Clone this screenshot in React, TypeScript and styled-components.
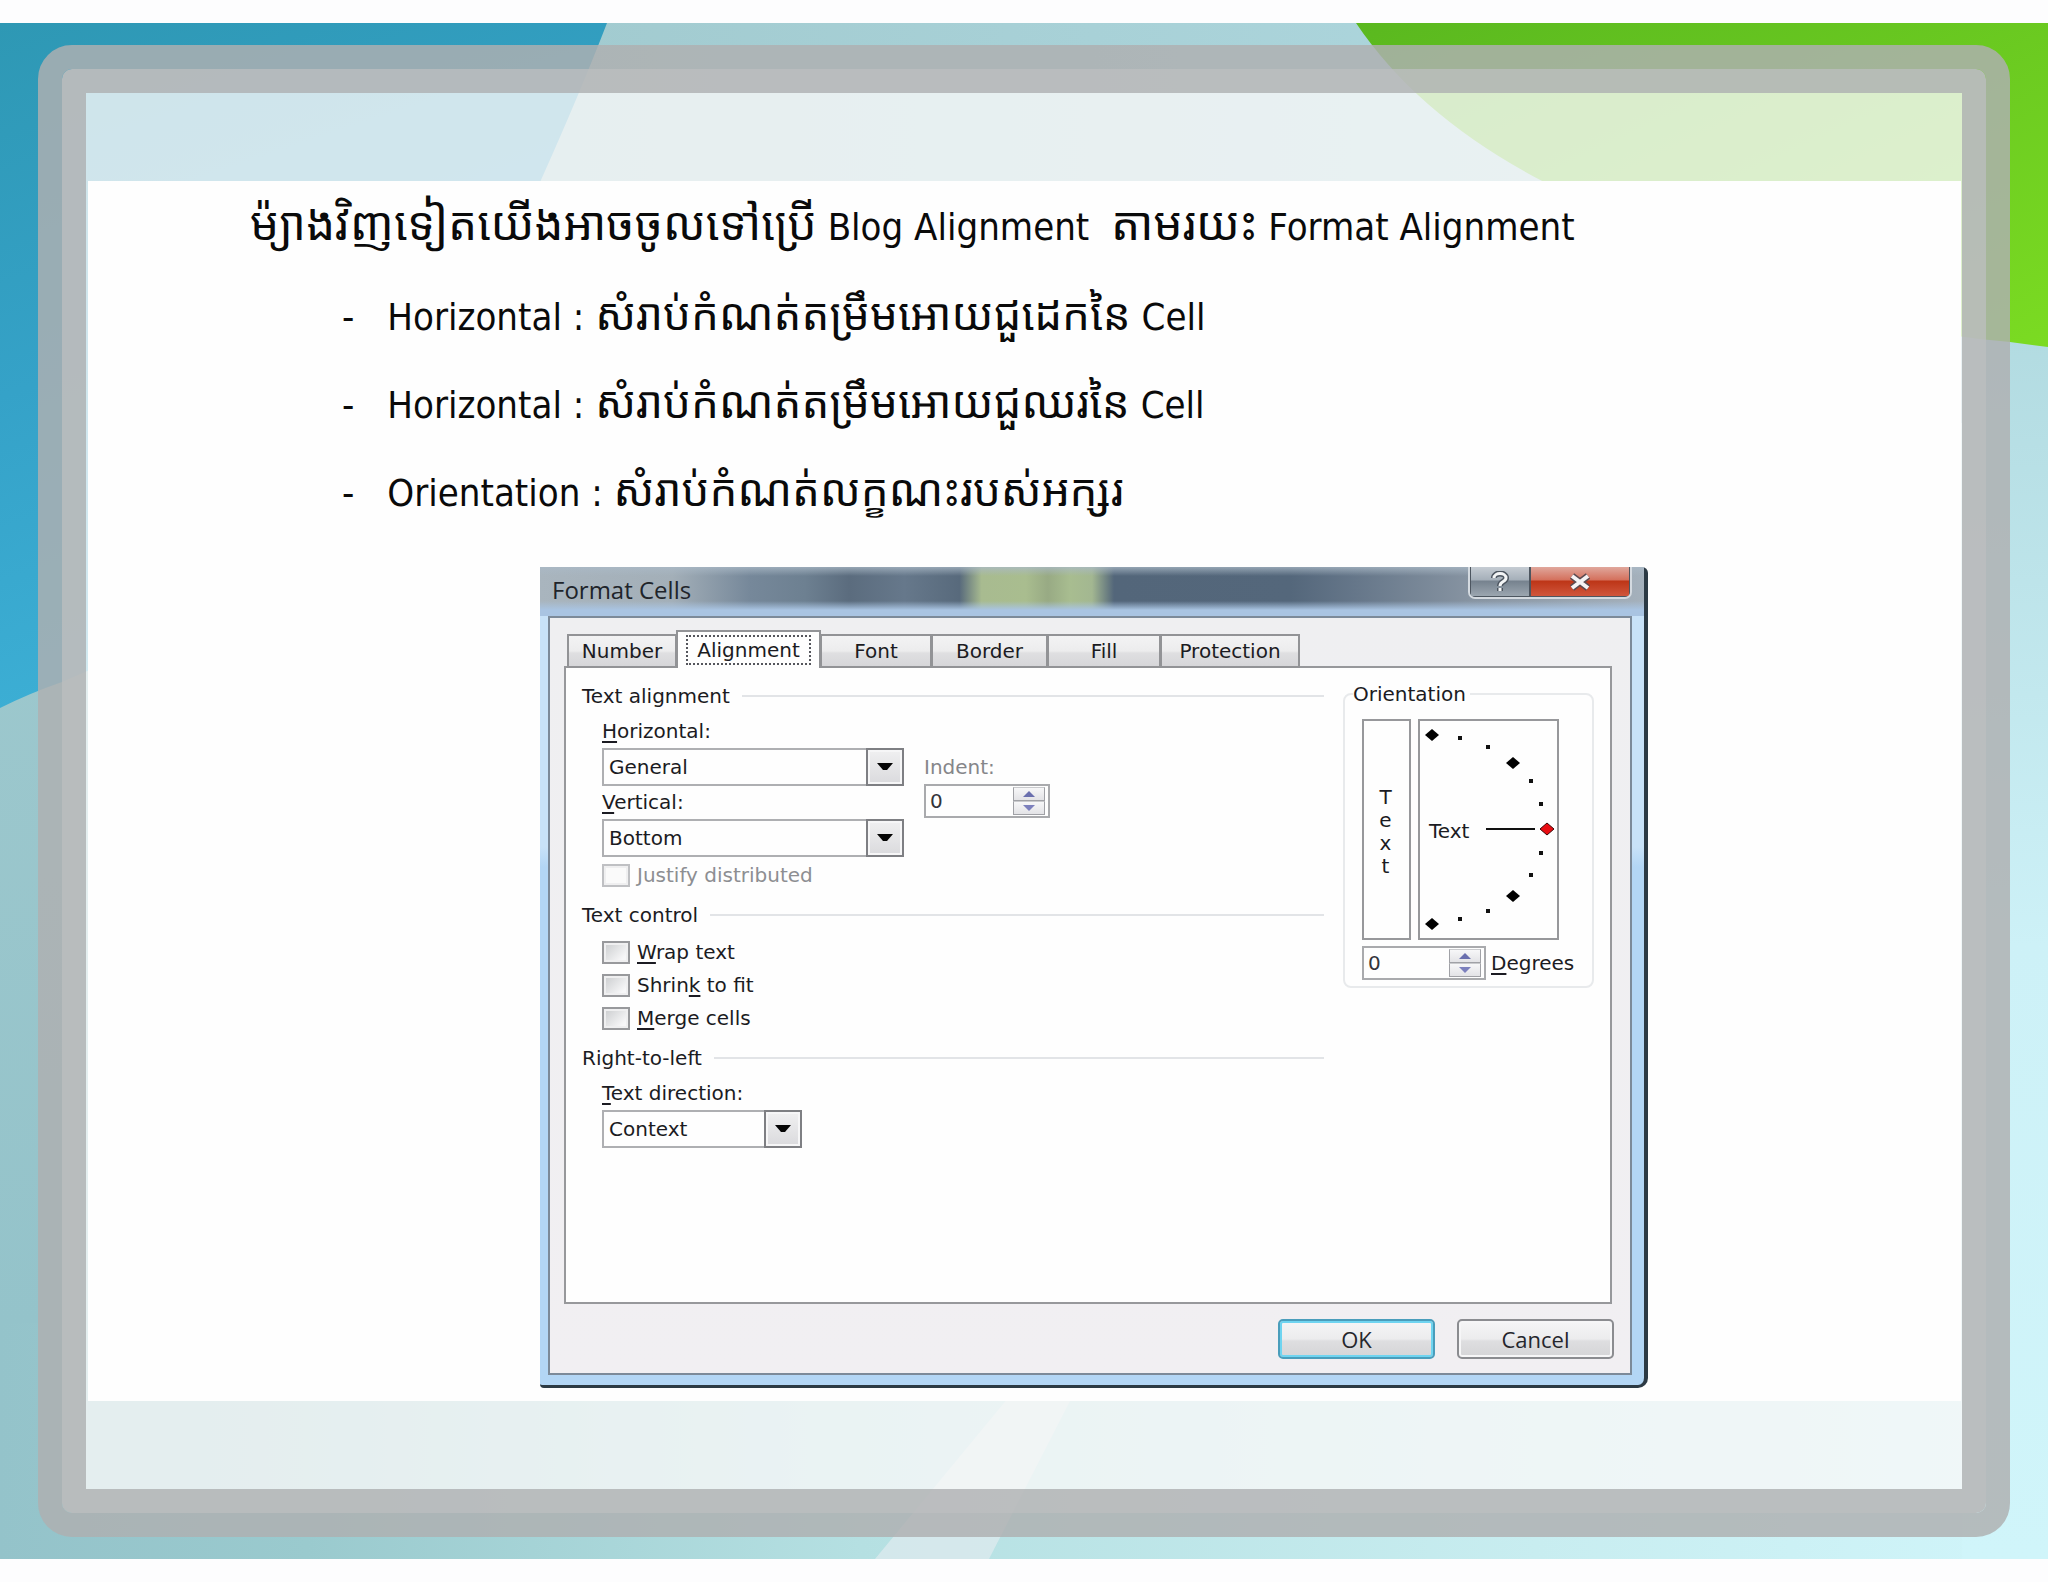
import React, { useState } from "react";
import styled, { createGlobalStyle, css } from "styled-components";

const GlobalStyle = createGlobalStyle`
  *, *::before, *::after { box-sizing: border-box; }
  body { margin: 0; background: #fdfdfe; }
`;

const uiFont = `"DejaVu Sans", "Liberation Sans", sans-serif`;
const captionFont = `"Open Sans", "Noto Sans", sans-serif`;
const slideFont = `"DejaVu Sans Condensed", "Noto Sans", "Noto Sans Khmer", "Khmer OS", sans-serif`;

/* ---------- slide ---------- */

const Page = styled.main`
  padding: 23px 0;
`;

const Slide = styled.section`
  position: relative;
  padding: 22px 38px;
`;

const Backdrop = styled.svg`
  position: absolute;
  inset: 0;
  width: 100%;
  height: 100%;
`;

const OuterFrame = styled.div`
  position: relative;
  border: 24px solid rgba(175, 176, 177, 0.83);
  border-radius: 34px;
`;

const InnerFrame = styled.div`
  border: 24px solid rgba(185, 187, 188, 0.96);
  border-radius: 10px;
`;

const Sheet = styled.div`
  padding: 88px 1px 88px 2px;
  background: rgba(248, 248, 248, 0.8);
`;

const Content = styled.article`
  padding: 2px 24px 13px 162px;
  background: #fefefe;
  color: #0a0a0a;
`;

const Khmer = styled.span`
  font-size: 44px;
  line-height: 1;
`;

const Lead = styled.h1`
  margin: 0 0 2px;
  font: 400 38px/88px ${slideFont};
  white-space: pre-wrap;

  ${Khmer} { font-size: 46px; }
`;

const Points = styled.ul`
  margin: 0 0 30px;
  padding: 0 0 0 92px;
  list-style: none;
`;

const Point = styled.li`
  display: flex;
  gap: 33px;
  font: 400 38px/88px ${slideFont};
`;

/* ---------- dialog window ---------- */

const Window = styled.section`
  width: 1108px;
  max-width: 100%;
  margin-left: 290px;
  padding: 0 12px 10px 8px;
  border: solid #2c3a44;
  border-width: 0 4px 3px 0;
  border-radius: 0 6px 10px 4px;
  background: linear-gradient(#c8e2f8 0 280px, #b3d6f5 300px);
  color: #1b1b22;
  font: 400 20px/28px ${uiFont};
`;

const TitleBar = styled.header`
  display: flex;
  align-items: flex-start;
  justify-content: space-between;
  height: 49px;
  margin: 0 -12px 0 -8px;
  padding: 0 12px;
  background:
    linear-gradient(rgba(170, 185, 198, 0.75), rgba(170, 185, 198, 0) 9px 34px, #a9c4e2 43px),
    linear-gradient(
      90deg,
      #a9b5be 0%,
      #a3afb8 12%,
      #76889a 19%,
      #6d8091 24%,
      #5b6c7e 28%,
      #66788b 33%,
      #586a7c 38%,
      #a8bb90 40%,
      #a9bd8f 44%,
      #98aa84 46%,
      #a8bd90 48%,
      #a3b791 50%,
      #53667a 52%,
      #54677b 68%,
      #66778a 74%,
      #8693a1 84%,
      #a5b1bc 100%
    );
`;

const Caption = styled.h2`
  margin: 0;
  font: 400 24px/46px ${captionFont};
  color: #20242a;
`;

const CaptionButtons = styled.div`
  display: flex;
  border: 2px solid #d4dae0;
  border-top: 0;
  border-radius: 0 0 7px 7px;
  overflow: hidden;
`;

const CaptionButton = styled.button<{ $danger?: boolean }>`
  display: grid;
  place-items: center;
  width: ${(p) => (p.$danger ? 100 : 60)}px;
  height: 30px;
  padding: 0;
  border: solid #4d5660;
  border-width: 0 1px 1px;
  background: ${(p) =>
    p.$danger
      ? "linear-gradient(#e0a79c, #d4705c 13px, #bd3517 14px, #d0563c)"
      : "linear-gradient(#c5ccd3, #a5afb9 13px, #76828e 14px, #9ba6b0)"};
`;

const ClientArea = styled.div`
  padding: 12px 18px 14px 14px;
  border: 2px solid #7c8a99;
  background: linear-gradient(#efeff1, #f1eff2);
`;

const TabStrip = styled.div`
  position: relative;
  display: flex;
  align-items: flex-end;
  height: 38px;
  margin: 0 0 -2px;
  padding-left: 4px;
`;

const Tab = styled.button<{ $width: number; $active: boolean }>`
  width: ${(p) => p.$width}px;
  height: 34px;
  padding: 0;
  border: 2px solid #929396;
  margin-left: -1px;
  background: linear-gradient(#f3f3f4, #ececed 15px, #dfdfe1 17px, #d6d6d9);
  color: inherit;
  font: inherit;
  ${(p) =>
    p.$active &&
    css`
      height: 38px;
      padding: 2px 8px;
      border-bottom: 0;
      background: #fefefe;
    `}
`;

const FocusRing = styled.span<{ $on: boolean }>`
  display: block;
  border: 2px dotted ${(p) => (p.$on ? "#55565c" : "transparent")};
  line-height: 26px;
`;

const Panel = styled.div`
  display: grid;
  grid-template-columns: minmax(0, 1fr) 251px;
  align-items: start;
  gap: 19px;
  min-height: 638px;
  padding: 11px 16px;
  border: 2px solid #97989b;
  background: #fefefe;
`;

const Sections = styled.div`
  display: grid;
  gap: 6px;
`;

const Group = styled.section``;

const GroupTitle = styled.h3`
  display: flex;
  align-items: center;
  gap: 12px;
  margin: 0 0 2px;
  font: inherit;
  line-height: 34px;

  &::after {
    content: "";
    flex: 1;
    height: 2px;
    background: #e2e4e7;
  }
`;

const GroupBody = styled.div`
  display: flex;
  gap: 20px;
  padding-left: 20px;
`;

const Column = styled.div<{ $lowered?: boolean }>`
  padding-top: ${(p) => (p.$lowered ? 36 : 0)}px;
`;

const FieldLabel = styled.label<{ $muted?: boolean }>`
  display: block;
  line-height: 33px;
  color: ${(p) => (p.$muted ? "#85868a" : "inherit")};

  &::first-letter {
    text-decoration: ${(p) => (p.$muted ? "none" : "underline")};
    text-underline-offset: 3px;
  }
`;

const ComboFrame = styled.div<{ $width: number }>`
  display: grid;
  grid-template-columns: 1fr 38px;
  width: ${(p) => p.$width}px;
  height: 38px;
`;

const ComboSelect = styled.select`
  grid-area: 1 / 1 / 2 / 3;
  appearance: none;
  padding: 0 44px 0 5px;
  border: 2px solid #aeafb2;
  border-radius: 0;
  background: #fefefe;
  color: inherit;
  font: inherit;
`;

const ComboArrow = styled.span`
  grid-area: 1 / 2;
  display: grid;
  place-items: center;
  border: 2px solid #7e7f83;
  background: linear-gradient(#f0f0f1, #dadadd);
  box-shadow: inset 0 0 0 2px #f6f6f7;
  pointer-events: none;
`;

const SpinFrame = styled.div<{ $width: number }>`
  display: flex;
  width: ${(p) => p.$width}px;
  height: 34px;
  padding: 1px 3px 1px 0;
  border: 2px solid #a9aaad;
  background: #fefefe;
`;

const SpinInput = styled.input`
  flex: 1;
  min-width: 0;
  padding: 0 4px;
  border: 0;
  background: transparent;
  color: #33343a;
  font: inherit;
`;

const SpinButtons = styled.div`
  display: grid;
  grid-template-rows: 1fr 1fr;
  width: 32px;
`;

const SpinButton = styled.button`
  display: grid;
  place-items: center;
  padding: 0;
  border: 1px solid #a0a1a6;
  border-top-color: #c9cacd;
  background: linear-gradient(#f7f7f8, #e3e3e6);
`;

const CheckList = styled.div`
  padding-top: 2px;
`;

const CheckRow = styled.label<{ $muted?: boolean }>`
  display: flex;
  align-items: center;
  gap: 7px;
  line-height: 33px;
  color: ${(p) => (p.$muted ? "#8d8e92" : "inherit")};
`;

const CheckBox = styled.input`
  appearance: none;
  width: 28px;
  height: 23px;
  margin: 0;
  border: 2px solid #98999c;
  background: linear-gradient(135deg, #c9cbcd, #f7f7f8 80%);
  box-shadow: inset 0 0 0 2px #efeff0;

  &:checked { background: #5a6b7e; }
  &:disabled { border-color: #bfc0c3; background: #fafafa; }
`;

const Key = styled.u`
  text-underline-offset: 3px;
`;

const OrientationBox = styled.fieldset`
  min-width: 0;
  margin: 1px 0 0;
  padding: 11px 10px 6px 17px;
  border: 2px solid #e8eaec;
  border-radius: 8px;
`;

const OrientationLegend = styled.legend`
  margin-left: -9px;
  padding: 0 4px 0 0;
  line-height: 28px;
`;

const DialRow = styled.div`
  display: flex;
  gap: 7px;
  margin-bottom: 6px;
`;

const Upright = styled.button`
  display: flex;
  flex-direction: column;
  align-items: center;
  justify-content: center;
  width: 49px;
  padding: 4px 2px 0 0;
  border: 2px solid #97989b;
  background: #fefefe;
  color: inherit;
  font: inherit;
  line-height: 23px;
`;

const Dial = styled.svg`
  width: 141px;
  height: 221px;
  border: 2px solid #97989b;
`;

const DegreeRow = styled.div`
  display: flex;
  align-items: center;
  gap: 5px;
`;

const Actions = styled.footer`
  display: flex;
  justify-content: flex-end;
  gap: 22px;
  margin: 15px -2px 0 0;
`;

const ActionButton = styled.button<{ $primary?: boolean }>`
  width: 157px;
  height: 40px;
  padding: 0;
  border: 2px solid ${(p) => (p.$primary ? "#4a9dbb" : "#8b8c90")};
  border-radius: 5px;
  background: linear-gradient(#f5f5f6, #ececed 18px, #dedee0 20px, #d5d5d7);
  box-shadow: inset 0 0 0 2px ${(p) => (p.$primary ? "#6fd4f0" : "#f6f6f7")};
  color: #25262c;
  font: 400 22px/28px ${captionFont};
`;

/* ---------- pieces ---------- */

function SlideArt() {
  return (
    <Backdrop viewBox="0 0 2048 1536" preserveAspectRatio="none" aria-hidden="true">
      <defs>
        <linearGradient id="floor" x1="0" y1="0" x2="1" y2="0">
          <stop offset="0" stopColor="#94c3ca" />
          <stop offset="0.15" stopColor="#9acace" />
          <stop offset="0.42" stopColor="#b5e0e2" />
          <stop offset="0.75" stopColor="#c8edf0" />
          <stop offset="1" stopColor="#d0f5fa" />
        </linearGradient>
        <linearGradient id="sky" x1="0" y1="0" x2="1" y2="0">
          <stop offset="0.28" stopColor="#a2cbd0" />
          <stop offset="1" stopColor="#b3dce4" />
        </linearGradient>
        <linearGradient id="skyFade" x1="0" y1="0" x2="0" y2="1">
          <stop offset="0.2" stopColor="#b2dbe1" />
          <stop offset="0.6" stopColor="#cdf1f7" />
          <stop offset="1" stopColor="#d0f5fa" />
        </linearGradient>
        <linearGradient id="leftFade" x1="0" y1="0" x2="0" y2="1">
          <stop offset="0" stopColor="#9fc9ce" />
          <stop offset="1" stopColor="#94c3ca" />
        </linearGradient>
        <linearGradient id="blue" x1="0" y1="0" x2="0.3" y2="1">
          <stop offset="0" stopColor="#2e98b4" />
          <stop offset="0.5" stopColor="#35a2c8" />
          <stop offset="1" stopColor="#3db0d6" />
        </linearGradient>
        <linearGradient id="green" x1="0" y1="0" x2="1" y2="1">
          <stop offset="0" stopColor="#5ab81f" />
          <stop offset="1" stopColor="#7bdb22" />
        </linearGradient>
      </defs>
      <rect width="2048" height="1536" fill="url(#floor)" />
      <rect width="2048" height="400" fill="url(#sky)" />
      <rect x="0" y="400" width="86" height="900" fill="url(#leftFade)" />
      <rect x="1962" width="86" height="1536" fill="url(#skyFade)" />
      <path d="M875 1536H989L1110 1300H1070Z" fill="#dceaee" opacity="0.8" />
      <path d="M0 0H607Q580 70 541 157Q440 500 62 659Q30 670 0 685Z" fill="url(#blue)" />
      <path d="M1356 0Q1420 95 1546 160Q1780 300 2010 319L2048 324V0Z" fill="url(#green)" />
    </Backdrop>
  );
}

/* Khmer runs are set larger than the Latin words beside them. */
function MixedText({ text }: { text: string }) {
  return (
    <>
      {text.split(/([\u1780-\u17ff]+)/).map((run, i) =>
        i % 2 ? <Khmer key={i}>{run}</Khmer> : <React.Fragment key={i}>{run}</React.Fragment>
      )}
    </>
  );
}

function Combo({ id, value, width, options }: { id: string; value: string; width: number; options: string[] }) {
  return (
    <ComboFrame $width={width}>
      <ComboSelect id={id} defaultValue={value}>
        {options.map((o) => (
          <option key={o}>{o}</option>
        ))}
      </ComboSelect>
      <ComboArrow>
        <svg width="16" height="8" viewBox="0 0 16 8">
          <path d="M0 0H16L10 7H6Z" fill="#050505" />
        </svg>
      </ComboArrow>
    </ComboFrame>
  );
}

function Spinner({ id, width }: { id: string; width: number }) {
  const [value, setValue] = useState(0);
  return (
    <SpinFrame $width={width}>
      <SpinInput id={id} value={value} onChange={(e) => setValue(Number(e.target.value) || 0)} />
      <SpinButtons>
        <SpinButton type="button" aria-label="Increase" onClick={() => setValue(value + 1)}>
          <svg width="12" height="6" viewBox="0 0 12 6">
            <path d="M6 0L12 6H0Z" fill="#6a6fae" />
          </svg>
        </SpinButton>
        <SpinButton type="button" aria-label="Decrease" onClick={() => setValue(value - 1)}>
          <svg width="12" height="6" viewBox="0 0 12 6">
            <path d="M0 0H12L6 6Z" fill="#7c80bd" />
          </svg>
        </SpinButton>
      </SpinButtons>
    </SpinFrame>
  );
}

const tabs = [
  { name: "Number", width: 110 },
  { name: "Alignment", width: 145 },
  { name: "Font", width: 112 },
  { name: "Border", width: 117 },
  { name: "Fill", width: 114 },
  { name: "Protection", width: 140 },
];

const diamonds = [
  [12, 14],
  [93, 42],
  [93, 175],
  [12, 203],
];
const dots = [
  [40, 17],
  [68, 26],
  [111, 60],
  [121, 83],
  [121, 132],
  [111, 154],
  [68, 190],
  [40, 198],
];
const diamondPath = (x: number, y: number) => `M${x - 7} ${y}L${x} ${y - 6}L${x + 7} ${y}L${x} ${y + 6}Z`;

function OrientationDial() {
  return (
    <Dial viewBox="0 0 137 217" role="img" aria-label="Text angle">
      {dots.map(([x, y]) => (
        <rect key={`${x}-${y}`} x={x - 2} y={y - 2} width="4" height="4" fill="#111" />
      ))}
      {diamonds.map(([x, y]) => (
        <path key={`${x}-${y}`} d={diamondPath(x, y)} fill="#000" />
      ))}
      <path d="M66 108H115" stroke="#111" strokeWidth="2" />
      <path d={diamondPath(127, 108)} fill="#e80c12" stroke="#3a0506" strokeWidth="1" />
      <text x="9" y="117" fill="#1b1b22">Text</text>
    </Dial>
  );
}

function FormatCells() {
  const [active, setActive] = useState("Alignment");
  return (
    <Window role="dialog" aria-labelledby="caption">
      <TitleBar>
        <Caption id="caption">Format Cells</Caption>
        <CaptionButtons>
          <CaptionButton type="button" aria-label="Help">
            <svg width="20" height="22" viewBox="0 0 20 22" fill="none">
              <path d="M4 7C4 1 16 1 16 7C16 11 10 10 10 15M10 17V20" stroke="#4d5660" strokeWidth="6" />
              <path d="M4 7C4 1 16 1 16 7C16 11 10 10 10 15M10 17V20" stroke="#f3f5f6" strokeWidth="3" />
            </svg>
          </CaptionButton>
          <CaptionButton type="button" aria-label="Close" $danger>
            <svg width="24" height="18" viewBox="0 0 24 18" fill="none">
              <path d="M4 3L20 15M20 3L4 15" stroke="#5b4a50" strokeWidth="7" />
              <path d="M4 3L20 15M20 3L4 15" stroke="#f5f3f4" strokeWidth="4" />
            </svg>
          </CaptionButton>
        </CaptionButtons>
      </TitleBar>
      <ClientArea>
        <TabStrip role="tablist">
          {tabs.map((t) => (
            <Tab
              key={t.name}
              type="button"
              role="tab"
              aria-selected={t.name === active}
              $width={t.width}
              $active={t.name === active}
              onClick={() => setActive(t.name)}
            >
              <FocusRing $on={t.name === active}>{t.name}</FocusRing>
            </Tab>
          ))}
        </TabStrip>
        <Panel role="tabpanel">
          <Sections>
            <Group>
              <GroupTitle>Text alignment</GroupTitle>
              <GroupBody>
                <Column>
                  <FieldLabel htmlFor="horizontal">Horizontal:</FieldLabel>
                  <Combo id="horizontal" value="General" width={302} options={["General", "Left", "Center", "Right"]} />
                  <FieldLabel htmlFor="vertical">Vertical:</FieldLabel>
                  <Combo id="vertical" value="Bottom" width={302} options={["Bottom", "Center", "Top"]} />
                  <CheckList>
                    <CheckRow $muted>
                      <CheckBox type="checkbox" disabled />
                      <span>Justify distributed</span>
                    </CheckRow>
                  </CheckList>
                </Column>
                <Column $lowered>
                  <FieldLabel htmlFor="indent" $muted>Indent:</FieldLabel>
                  <Spinner id="indent" width={126} />
                </Column>
              </GroupBody>
            </Group>
            <Group>
              <GroupTitle>Text control</GroupTitle>
              <GroupBody>
                <CheckList>
                  <CheckRow>
                    <CheckBox type="checkbox" />
                    <span><Key>W</Key>rap text</span>
                  </CheckRow>
                  <CheckRow>
                    <CheckBox type="checkbox" />
                    <span>Shrin<Key>k</Key> to fit</span>
                  </CheckRow>
                  <CheckRow>
                    <CheckBox type="checkbox" />
                    <span><Key>M</Key>erge cells</span>
                  </CheckRow>
                </CheckList>
              </GroupBody>
            </Group>
            <Group>
              <GroupTitle>Right-to-left</GroupTitle>
              <GroupBody>
                <Column>
                  <FieldLabel htmlFor="direction">Text direction:</FieldLabel>
                  <Combo id="direction" value="Context" width={200} options={["Context", "Left-to-Right", "Right-to-Left"]} />
                </Column>
              </GroupBody>
            </Group>
          </Sections>
          <OrientationBox>
            <OrientationLegend>Orientation</OrientationLegend>
            <DialRow>
              <Upright type="button" aria-label="Vertical text">
                <span>T</span>
                <span>e</span>
                <span>x</span>
                <span>t</span>
              </Upright>
              <OrientationDial />
            </DialRow>
            <DegreeRow>
              <Spinner id="degrees" width={124} />
              <FieldLabel htmlFor="degrees">Degrees</FieldLabel>
            </DegreeRow>
          </OrientationBox>
        </Panel>
        <Actions>
          <ActionButton type="button" $primary>OK</ActionButton>
          <ActionButton type="button">Cancel</ActionButton>
        </Actions>
      </ClientArea>
    </Window>
  );
}

const points = [
  "Horizontal : សំរាប់កំណត់តម្រឹមអោយជួដេកនៃ Cell",
  "Horizontal : សំរាប់កំណត់តម្រឹមអោយជួឈរនៃ Cell",
  "Orientation : សំរាប់កំណត់លក្ខណះរបស់អក្សរ",
];

export default function App() {
  return (
    <Page>
      <GlobalStyle />
      <Slide>
        <SlideArt />
        <OuterFrame>
          <InnerFrame>
            <Sheet>
              <Content lang="km">
                <Lead>
                  <MixedText text="ម៉្យាងវិញទៀតយើងអាចចូលទៅប្រើ Blog Alignment  តាមរយះ Format Alignment" />
                </Lead>
                <Points>
                  {points.map((p) => (
                    <Point key={p}>
                      <span>-</span>
                      <span><MixedText text={p} /></span>
                    </Point>
                  ))}
                </Points>
                <FormatCells />
              </Content>
            </Sheet>
          </InnerFrame>
        </OuterFrame>
      </Slide>
    </Page>
  );
}
